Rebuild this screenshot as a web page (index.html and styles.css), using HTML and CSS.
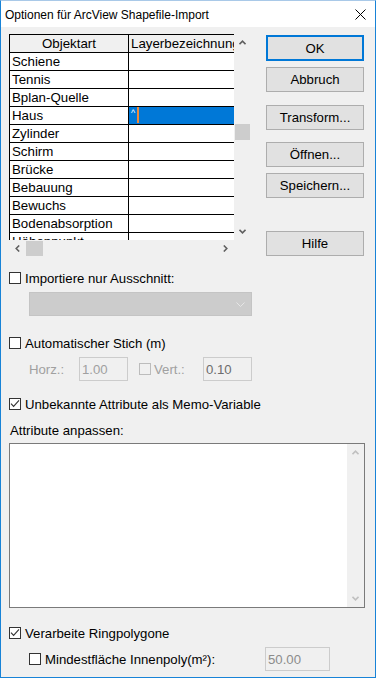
FILE: index.html
```html
<!DOCTYPE html>
<html lang="de">
<head>
<meta charset="utf-8">
<title>Optionen für ArcView Shapefile-Import</title>
<link rel="stylesheet" href="styles.css">
</head>
<body>
<div class="window">
  <div class="titlebar">
    <span class="title">Optionen für ArcView Shapefile-Import</span>
    <svg class="close" width="11" height="11" viewBox="0 0 11 11"><path d="M0.5 0.5 L10.5 10.5 M10.5 0.5 L0.5 10.5" stroke="#000" stroke-width="1" fill="none"/></svg>
  </div>
  <div class="content">
    <div class="top">
      <div class="listbox">
        <div class="gridview">
          <div class="row head"><div class="c1 centered">Objektart</div><div class="c2">Layerbezeichnung</div></div>
          <div class="row"><div class="c1">Schiene</div><div class="c2"></div></div>
          <div class="row"><div class="c1">Tennis</div><div class="c2"></div></div>
          <div class="row"><div class="c1">Bplan-Quelle</div><div class="c2"></div></div>
          <div class="row"><div class="c1">Haus</div><div class="c2 sel"><span class="hat">^</span><span class="cursor"></span></div></div>
          <div class="row"><div class="c1">Zylinder</div><div class="c2"></div></div>
          <div class="row"><div class="c1">Schirm</div><div class="c2"></div></div>
          <div class="row"><div class="c1">Brücke</div><div class="c2"></div></div>
          <div class="row"><div class="c1">Bebauung</div><div class="c2"></div></div>
          <div class="row"><div class="c1">Bewuchs</div><div class="c2"></div></div>
          <div class="row"><div class="c1">Bodenabsorption</div><div class="c2"></div></div>
          <div class="row"><div class="c1">Höhenpunkt</div><div class="c2"></div></div>
        </div>
        <div class="vscroll">
          <div class="sbtn"><svg width="7" height="5" viewBox="0 0 7 5"><polyline points="0.5,4.2 3.5,1.2 6.5,4.2" fill="none" stroke="#606060" stroke-width="1.6"/></svg></div>
          <div class="vtrack"><div class="vthumb"></div></div>
          <div class="sbtn"><svg width="7" height="5" viewBox="0 0 7 5"><polyline points="0.5,0.8 3.5,3.8 6.5,0.8" fill="none" stroke="#606060" stroke-width="1.6"/></svg></div>
        </div>
        <div class="hscroll">
          <div class="hbtn"><svg width="5" height="7" viewBox="0 0 5 7"><polyline points="4.2,0.5 1.2,3.5 4.2,6.5" fill="none" stroke="#606060" stroke-width="1.6"/></svg></div>
          <div class="hthumb"></div>
          <div class="htrack"></div>
          <div class="hbtn"><svg width="5" height="7" viewBox="0 0 5 7"><polyline points="0.8,0.5 3.8,3.5 0.8,6.5" fill="none" stroke="#606060" stroke-width="1.6"/></svg></div>
        </div>
        <div class="corner"></div>
      </div>
      <div class="buttons">
        <div class="btn default">OK</div>
        <div class="btn gap-s">Abbruch</div>
        <div class="btn gap-m">Transform...</div>
        <div class="btn gap-m2">Öffnen...</div>
        <div class="btn gap-s">Speichern...</div>
        <div class="btn gap-l">Hilfe</div>
      </div>
    </div>

    <div class="chkrow r-import">
      <span class="chk"></span><span class="lbl">Importiere nur Ausschnitt:</span>
    </div>
    <div class="combo">
      <svg width="9" height="5" viewBox="0 0 9 5"><polyline points="0.5,0.5 4.5,4.5 8.5,0.5" fill="none" stroke="#e6e6e6" stroke-width="1"/></svg>
    </div>

    <div class="chkrow r-auto">
      <span class="chk"></span><span class="lbl">Automatischer Stich (m)</span>
    </div>
    <div class="fieldrow r-fields">
      <span class="dis-lbl w-horz">Horz.:</span>
      <span class="field light">1.00</span>
      <span class="chk disabled vchk"></span>
      <span class="dis-lbl w-vert">Vert.:</span>
      <span class="field dark">0.10</span>
    </div>

    <div class="chkrow r-memo">
      <span class="chk"><svg width="10" height="10" viewBox="0 0 10 10"><polyline points="1,4.6 3.6,7.4 9,1.4" fill="none" stroke="#333" stroke-width="1.1"/></svg></span><span class="lbl">Unbekannte Attribute als Memo-Variable</span>
    </div>

    <div class="attr-lbl">Attribute anpassen:</div>
    <div class="textarea">
      <div class="tscroll">
        <div class="sbtn"><svg width="7" height="5" viewBox="0 0 7 5"><polyline points="0.5,4.2 3.5,1.2 6.5,4.2" fill="none" stroke="#c0c0c0" stroke-width="1.6"/></svg></div>
        <div class="sbtn"><svg width="7" height="5" viewBox="0 0 7 5"><polyline points="0.5,0.8 3.5,3.8 6.5,0.8" fill="none" stroke="#c0c0c0" stroke-width="1.6"/></svg></div>
      </div>
    </div>

    <div class="chkrow r-ring">
      <span class="chk"><svg width="10" height="10" viewBox="0 0 10 10"><polyline points="1,4.6 3.6,7.4 9,1.4" fill="none" stroke="#333" stroke-width="1.1"/></svg></span><span class="lbl">Verarbeite Ringpolygone</span>
    </div>
    <div class="fieldrow r-min">
      <span class="chk"></span>
      <span class="lbl w-min">Mindestfläche Innenpoly(m²):</span>
      <span class="field mid w-num">50.00</span>
    </div>
  </div>
</div>
</body>
</html>
```

FILE: styles.css
```css
html, body {
  margin: 0;
  padding: 0;
  background: #f0f0f0;
}
body {
  font-family: "Liberation Sans", Arial, sans-serif;
  font-size: 13.2px;
  color: #000;
}
.window {
  width: 376px;
  height: 678px;
  box-sizing: border-box;
  border: 1px solid #1883d7;
  border-top-color: #a9c9e8;
  background: #f0f0f0;
  overflow: hidden;
}
.titlebar {
  height: 26px;
  background: #fff;
  display: flex;
  align-items: center;
  justify-content: space-between;
  padding: 0 9px 0 4px;
  font-size: 12px;
}
.title {
  padding-top: 1px;
}
.close {
  display: block;
  margin-top: 1px;
}
.content {
  padding: 7px 0 0 8px;
}
.top {
  display: flex;
  align-items: flex-start;
}
.listbox {
  display: grid;
  grid-template-columns: 225px 17px;
  grid-template-rows: 206px 17px;
}
.gridview {
  background: #fff;
  border-left: 1px solid #000;
  border-top: 1px solid #000;
  overflow: hidden;
  font-size: 13.3px;
}
.row {
  display: flex;
  height: 18px;
  box-sizing: border-box;
  border-bottom: 1px solid #000;
  white-space: nowrap;
}
.row.head .c1,
.row.head .c2 {
  background: #f0f0f0;
}
.c1, .c2 {
  flex: none;
  height: 17px;
  line-height: 17px;
  box-sizing: border-box;
  border-right: 1px solid #000;
  padding-left: 2px;
  overflow: hidden;
}
.c1 {
  width: 119px;
}
.c2 {
  width: 200px;
}
.centered {
  text-align: center;
  padding-left: 0;
}
.sel {
  background: #0078d7;
  display: flex;
  align-items: flex-start;
}
.hat {
  color: #fff;
  font-size: 9px;
  line-height: 10px;
  margin-top: 1px;
}
.cursor {
  width: 2px;
  height: 16px;
  background: #f08a3c;
  margin-left: 2px;
}
.vscroll {
  background: #f0f0f0;
  display: flex;
  flex-direction: column;
}
.sbtn {
  height: 17px;
  flex: none;
  display: flex;
  align-items: center;
  justify-content: center;
}
.vtrack {
  flex: 1;
  padding: 73px 1px 0 1px;
}
.vthumb {
  height: 16px;
  background: #cdcdcd;
}
.hscroll {
  background: #f0f0f0;
  display: flex;
}
.hbtn {
  width: 17px;
  flex: none;
  display: flex;
  align-items: center;
  justify-content: center;
}
.hthumb {
  width: 17px;
  margin: 1px 0;
  background: #cdcdcd;
}
.htrack {
  flex: 1;
}
.corner {
  background: #f0f0f0;
}
.buttons {
  margin-left: 15px;
  width: 98px;
  display: flex;
  flex-direction: column;
}
.btn {
  height: 25px;
  box-sizing: border-box;
  border: 1px solid #adadad;
  background: #e1e1e1;
  display: flex;
  align-items: center;
  justify-content: center;
}
.btn.default {
  height: 26px;
  margin-top: 1px;
  border: 2px solid #0078d7;
}
.gap-s { margin-top: 6px; }
.gap-m { margin-top: 13px; }
.gap-m2 { margin-top: 12px; }
.gap-l { margin-top: 33px; }

.chkrow {
  display: flex;
  align-items: center;
  height: 12px;
  white-space: nowrap;
}
.chk {
  width: 12px;
  height: 12px;
  box-sizing: border-box;
  border: 1px solid #333;
  background: #fff;
  flex: none;
  display: flex;
}
.chk svg {
  display: block;
}
.chk.disabled {
  border-color: #bcbcbc;
  background: #f0f0f0;
}
.lbl {
  margin-left: 4px;
}
.r-import { margin-top: 15px; }
.combo {
  margin: 8px 0 0 20px;
  width: 223px;
  height: 24px;
  box-sizing: border-box;
  background: #cccccc;
  border: 1px solid #c4c4c4;
  display: flex;
  align-items: center;
  justify-content: flex-end;
  padding-right: 6px;
}
.combo svg {
  display: block;
}
.r-auto { margin-top: 21px; }
.fieldrow {
  display: flex;
  align-items: center;
  height: 24px;
  margin-left: 20px;
  white-space: nowrap;
}
.r-fields { margin-top: 8px; }
.dis-lbl {
  color: #a0a0a0;
}
.w-horz { width: 50px; }
.w-vert { width: 49px; margin-left: 3px; }
.vchk { margin-left: 11px; }
.field {
  height: 24px;
  width: 49px;
  box-sizing: border-box;
  border: 1px solid #cccccc;
  background: #f0f0f0;
  padding-left: 2px;
  display: flex;
  align-items: center;
}
.field.light { color: #a0a0a0; }
.field.dark { color: #6d6d6d; }
.field.mid { color: #8c8c8c; }
.r-memo { margin-top: 17px; }
.attr-lbl {
  margin: 13px 0 0 1px;
  height: 15px;
  line-height: 15px;
}
.textarea {
  margin-top: 5px;
  width: 356px;
  height: 165px;
  box-sizing: border-box;
  border: 1px solid #7a7a7a;
  background: #fff;
  display: flex;
  justify-content: flex-end;
}
.tscroll {
  width: 17px;
  background: #f0f0f0;
  display: flex;
  flex-direction: column;
  justify-content: space-between;
}
.r-ring { margin-top: 19px; }
.r-min { margin-top: 8px; }
.w-min { width: 220px; }
.w-num { width: 65px; }
```
